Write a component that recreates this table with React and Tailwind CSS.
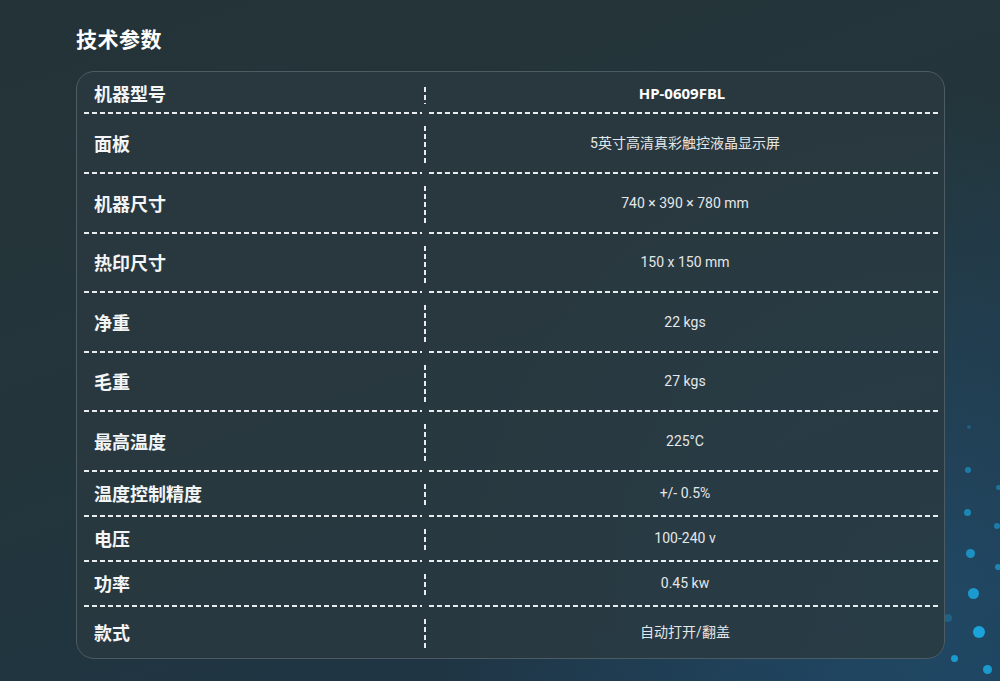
const rows = [
  { label: '机器型号', value: 'HP-0609FBL', h: 'h-[42px]', bold: true, pt: 'pt-[3px]' },
  { label: '面板', value: '5英寸高清真彩触控液晶显示屏', h: 'h-[60px]' },
  { label: '机器尺寸', value: '740 × 390 × 780 mm', h: 'h-[60px]' },
  { label: '热印尺寸', value: '150 x 150 mm', h: 'h-[59px]' },
  { label: '净重', value: '22 kgs', h: 'h-[60px]' },
  { label: '毛重', value: '27 kgs', h: 'h-[59px]' },
  { label: '最高温度', value: '225°C', h: 'h-[60px]' },
  { label: '温度控制精度', value: '+/- 0.5%', h: 'h-[45px]' },
  { label: '电压', value: '100-240 v', h: 'h-[45px]' },
  { label: '功率', value: '0.45 kw', h: 'h-[45px]' },
  { label: '款式', value: '自动打开/翻盖', h: 'h-[51px]', last: true },
];

const dots = [
  { x: 969, y: 427, r: 2, o: 'opacity-30' },
  { x: 968, y: 470, r: 3, o: 'opacity-60' },
  { x: 998, y: 487, r: 2.5, o: 'opacity-50' },
  { x: 967, y: 512, r: 3.5, o: 'opacity-70' },
  { x: 997, y: 526, r: 3, o: 'opacity-60' },
  { x: 970, y: 553, r: 4.5, o: 'opacity-80' },
  { x: 998, y: 567, r: 3, o: 'opacity-70' },
  { x: 973, y: 593, r: 5.5, o: 'opacity-90' },
  { x: 979, y: 632, r: 6, o: 'opacity-100' },
  { x: 948, y: 618, r: 4, o: 'opacity-30' },
  { x: 954, y: 658, r: 3.5, o: 'opacity-90' },
  { x: 987, y: 669, r: 4.5, o: 'opacity-90' },
];

function HDash({ className = '' }) {
  return (
    <div
      className={`h-[2px] bg-[linear-gradient(to_right,#e8ecee_5px,transparent_5px)] bg-[length:8px_2px] bg-repeat-x ${className}`}
    />
  );
}

export default function App() {
  return (
    <div className="relative w-[1000px] h-[681px] overflow-hidden bg-[linear-gradient(160deg,#243338_0%,#23353b_45%,#1f3544_80%,#1c3a50_100%)] font-['Noto_Sans_CJK_SC',sans-serif]">
      <div className="absolute inset-0 bg-[radial-gradient(circle_at_92%_85%,rgba(40,110,160,0.3),transparent_45%)]" />

      {dots.map((d, i) => (
        <span
          key={i}
          className={`absolute rounded-full bg-[#1ba3dc] ${d.o}`}
          style={{ left: d.x - d.r, top: d.y - d.r, width: d.r * 2, height: d.r * 2 }}
        />
      ))}

      <div className="relative pl-[76px] pt-[24px]">
        <h1 className="text-[21px] leading-[28px] font-bold text-white tracking-[0.5px]">技术参数</h1>

        <div className="mt-[19px] w-[869px] rounded-[18px] border border-[#4c5c62] bg-[#2b3a40]/80 overflow-hidden">
          {rows.map((r, i) => (
            <div key={i} className={`flex ${r.h}`}>
              <div className="w-[349px] flex flex-col">
                <div className={`flex-1 flex items-stretch ${r.pt || ''}`}>
                  <div className="flex-1 flex items-center pl-[17px] text-[18px] font-bold text-[#f3f5f6]">
                    {r.label}
                  </div>
                  <div className="w-[2px] mt-[12px] mb-[8px] bg-[linear-gradient(to_bottom,#e8ecee_5px,transparent_5px)] bg-[length:2px_8px] bg-repeat-y" />
                </div>
                {!r.last && <HDash className="ml-[7px] mr-[4px]" />}
              </div>
              <div className="flex-1 flex flex-col">
                <div
                  className={`flex-1 flex items-center justify-center text-[#e4e7e9] ${r.pt || ''} ${
                    r.bold
                      ? "text-[15px] font-bold text-white font-['Noto_Sans',sans-serif] pr-[6px]"
                      : "text-[14px] font-['Roboto','Noto_Sans_CJK_SC',sans-serif]"
                  }`}
                >
                  {r.value}
                </div>
                {!r.last && <HDash className="ml-[3px] mr-[5px]" />}
              </div>
            </div>
          ))}
        </div>
      </div>
    </div>
  );
}
